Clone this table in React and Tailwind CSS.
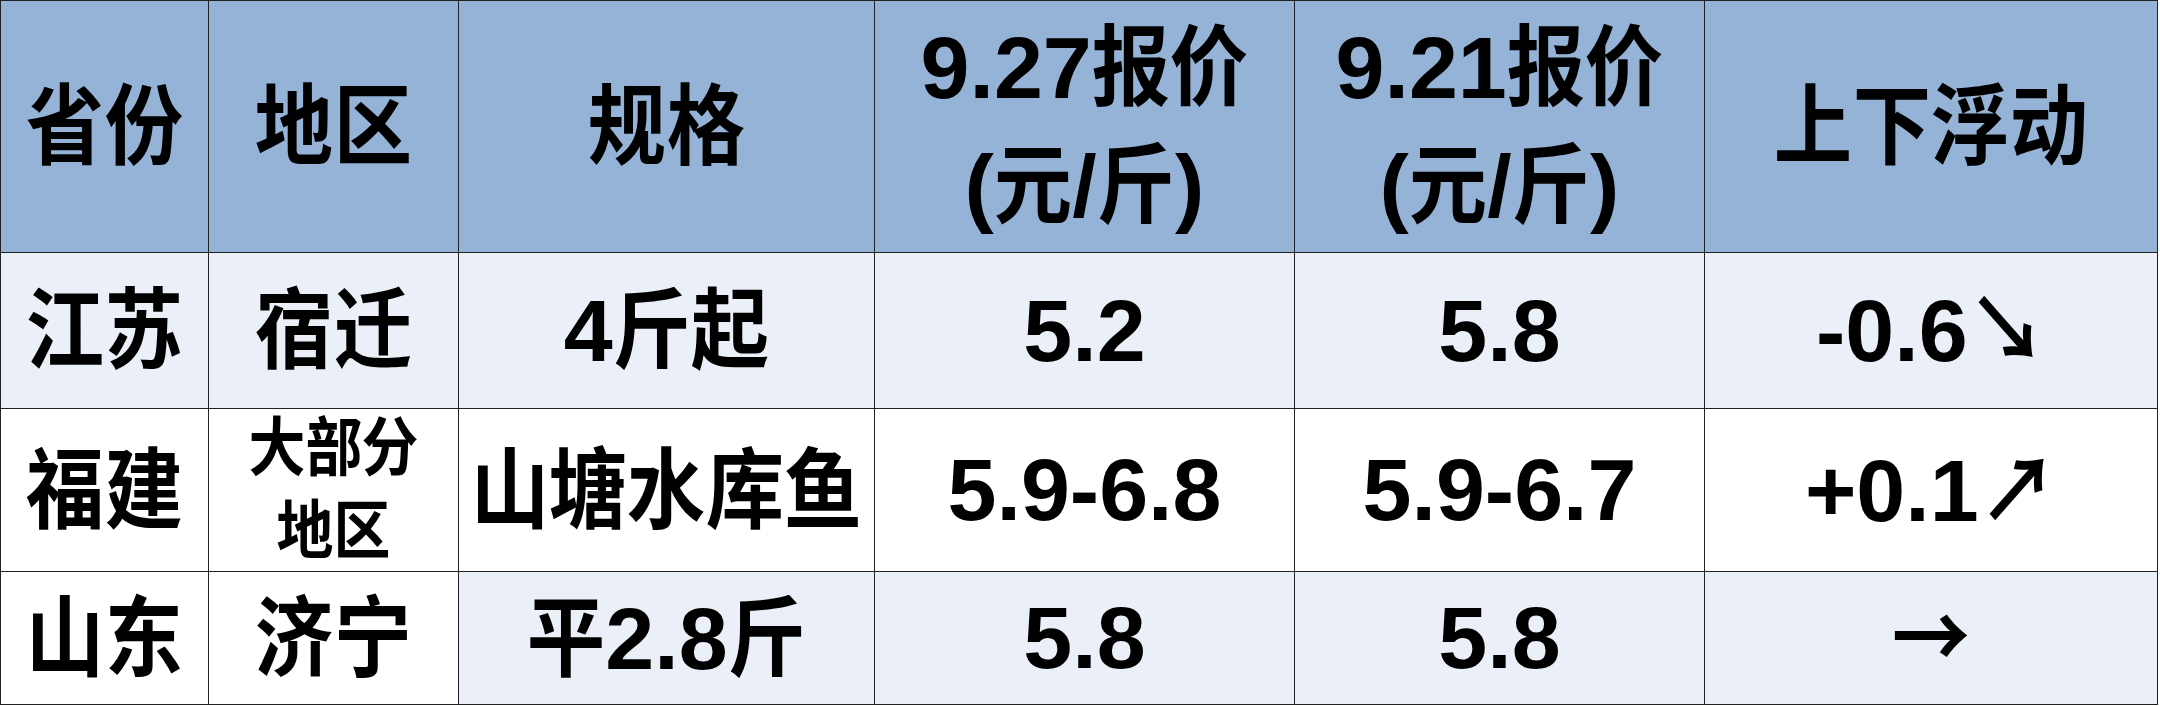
import React from "react";

const HEAD = "bg-[#95B3D7]";
const LIGHT = "bg-[#EBF0F8]";
const WHITE = "bg-white";

// CJK glyphs in the picture are squeezed horizontally, the digits are not
const isWide = (ch) => /[\u2190-\u21ff\u3000-\u9fff\uff00-\uffef]/.test(ch);

const T = ({ s }) => (
  <>
    {Array.from(s).map((ch, i) =>
      isWide(ch) ? (
        <span
          key={i}
          className="inline-block -mx-[0.055em] scale-x-[0.89] leading-none"
          style={{ fontFamily: '"Noto Sans CJK SC", sans-serif' }}
        >
          {ch}
        </span>
      ) : (
        <span key={i}>{ch}</span>
      )
    )}
  </>
);

const Cell = ({ bg, children, small, lead }) => (
  <div
    className={`${bg} flex items-center justify-center border-r border-b border-[#222] text-black font-bold text-center whitespace-nowrap ${
      small ? "text-[64px]" : "text-[88px]"
    } ${lead || "leading-[1.15]"}`}
    style={{ fontFamily: '"Liberation Sans", "Noto Sans CJK SC", sans-serif' }}
  >
    <div>{children}</div>
  </div>
);

const Two = ({ a, b }) => (
  <>
    <div>
      <T s={a} />
    </div>
    <div>
      <T s={b} />
    </div>
  </>
);

export default function App() {
  return (
    <div className="w-[2158px] h-[706px] bg-white">
      <div className="grid grid-cols-[208px_250px_416px_420px_410px_453px] grid-rows-[252px_156px_163px_133px] border-l border-t border-[#222]">
        <Cell bg={HEAD}>
          <T s="省份" />
        </Cell>
        <Cell bg={HEAD}>
          <T s="地区" />
        </Cell>
        <Cell bg={HEAD}>
          <T s="规格" />
        </Cell>
        <Cell bg={HEAD} lead="leading-[118px]">
          <Two a="9.27报价" b="(元/斤)" />
        </Cell>
        <Cell bg={HEAD} lead="leading-[118px]">
          <Two a="9.21报价" b="(元/斤)" />
        </Cell>
        <Cell bg={HEAD}>
          <T s="上下浮动" />
        </Cell>

        <Cell bg={LIGHT}>
          <T s="江苏" />
        </Cell>
        <Cell bg={LIGHT}>
          <T s="宿迁" />
        </Cell>
        <Cell bg={LIGHT}>
          <T s="4斤起" />
        </Cell>
        <Cell bg={LIGHT}>
          <T s="5.2" />
        </Cell>
        <Cell bg={LIGHT}>
          <T s="5.8" />
        </Cell>
        <Cell bg={LIGHT}>
          <T s="-0.6↘" />
        </Cell>

        <Cell bg={WHITE}>
          <T s="福建" />
        </Cell>
        <Cell bg={WHITE} small lead="leading-[83px]">
          <Two a="大部分" b="地区" />
        </Cell>
        <Cell bg={WHITE}>
          <T s="山塘水库鱼" />
        </Cell>
        <Cell bg={WHITE}>
          <T s="5.9-6.8" />
        </Cell>
        <Cell bg={WHITE}>
          <T s="5.9-6.7" />
        </Cell>
        <Cell bg={WHITE}>
          <T s="+0.1↗" />
        </Cell>

        <Cell bg={WHITE}>
          <T s="山东" />
        </Cell>
        <Cell bg={WHITE}>
          <T s="济宁" />
        </Cell>
        <Cell bg={LIGHT}>
          <T s="平2.8斤" />
        </Cell>
        <Cell bg={LIGHT}>
          <T s="5.8" />
        </Cell>
        <Cell bg={LIGHT}>
          <T s="5.8" />
        </Cell>
        <Cell bg={LIGHT}>
          <T s="→" />
        </Cell>
      </div>
    </div>
  );
}
